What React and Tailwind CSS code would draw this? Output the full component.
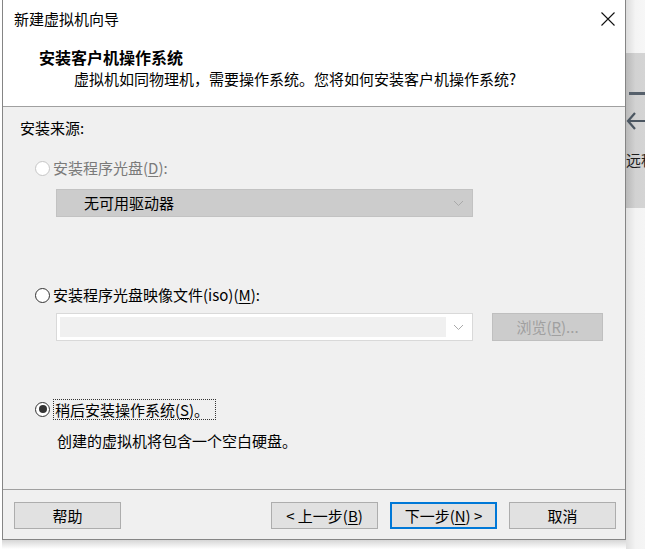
import React from 'react';

const Mn = ({ children }) => <span className="underline underline-offset-2">{children}</span>;

const Radio = ({ checked, disabled }) => (
  <span
    className={`w-[15px] h-[15px] rounded-full border flex items-center justify-center shrink-0 bg-white ${
      disabled ? 'border-[#c6c6c6]' : 'border-[#333333]'
    }`}
  >
    {checked && <span className="w-[8px] h-[8px] rounded-full bg-[#333333]" />}
  </span>
);

const Chevron = () => (
  <svg width="11" height="7" viewBox="0 0 11 7" fill="none">
    <path d="M1 1 L5.5 5.5 L10 1" stroke="#a9a9a9" strokeWidth="1" />
  </svg>
);

const Button = ({ children, primary }) => (
  <button
    type="button"
    className={`w-[107px] h-[27px] bg-[#e1e1e1] text-[15px] leading-[20px] text-black flex items-center justify-center ${
      primary ? 'border-2 border-[#0078d7]' : 'border border-[#adadad]'
    }`}
  >
    {children}
  </button>
);

const App = () => {
  return (
    <div className="w-[645px] h-[549px] flex bg-white overflow-hidden font-['Noto_Sans_CJK_SC','Noto_Sans',sans-serif] text-[15px] leading-[20px] text-black">
      <div className="w-[626px] pl-[2px] flex flex-col">
        <div className="w-[624px] h-[540px] flex flex-col border-x border-b border-[#858585]">
          {/* title bar */}
          <div className="h-[37px] bg-white flex items-center justify-between pl-[11px] pr-[10px]">
            <span>新建虚拟机向导</span>
            <svg width="14" height="14" viewBox="0 0 14 14" className="mt-[1px]">
              <path d="M0.5 0.5 L13.5 13.5 M13.5 0.5 L0.5 13.5" stroke="#111" strokeWidth="1.1" />
            </svg>
          </div>

          {/* header */}
          <div className="h-[70px] bg-white border-b border-[#a0a0a0] pt-[10px]">
            <div className="pl-[36px] font-bold text-[16px]">安装客户机操作系统</div>
            <div className="pl-[71px] mt-[2px]">虚拟机如同物理机，需要操作系统。您将如何安装客户机操作系统?</div>
          </div>

          {/* body */}
          <div className="h-[382px] bg-[#f0f0f0] pt-[11px] flex flex-col">
            <div className="ml-[17px]">安装来源:</div>

            <div className="ml-[32px] mt-[20px] h-[20px] flex items-center gap-[3px]">
              <Radio disabled />
              <span className="text-[#7a7a7a]">
                安装程序光盘(<Mn>D</Mn>):
              </span>
            </div>

            <div className="ml-[53px] mt-[11px] w-[417px] h-[28px] bg-[#cccccc] border border-[#c2c2c2] flex items-center justify-between pl-[27px] pr-[8px]">
              <span>无可用驱动器</span>
              <Chevron />
            </div>

            <div className="ml-[32px] mt-[68px] h-[20px] flex items-center gap-[3px]">
              <Radio />
              <span>
                安装程序光盘映像文件(iso)(<Mn>M</Mn>):
              </span>
            </div>

            <div className="ml-[53px] mt-[8px] flex gap-[19px]">
              <div className="w-[417px] h-[28px] bg-white border border-[#d9d9d9] flex items-center p-[3px] pr-[8px] gap-[7px]">
                <div className="flex-1 h-full bg-[#f0f0f0]" />
                <Chevron />
              </div>
              <div className="w-[111px] h-[28px] bg-[#cccccc] border border-[#bfbfbf] flex items-center justify-center text-[#a0a0a0]">
                浏览(<Mn>R</Mn>)...
              </div>
            </div>

            <div className="ml-[32px] mt-[57px] h-[22px] flex items-center gap-[3px]">
              <Radio checked />
              <span className="border border-dotted border-[#333] px-[1px] leading-[19px] pr-[6px]">
                稍后安装操作系统(<Mn>S</Mn>)。
              </span>
            </div>

            <div className="ml-[54px] mt-[11px]">创建的虚拟机将包含一个空白硬盘。</div>
          </div>

          {/* footer */}
          <div className="flex-1 bg-[#f0f0f0] border-t border-[#a0a0a0] pt-[12px] flex pl-[11px] pr-[9px]">
            <Button>帮助</Button>
            <div className="flex-1" />
            <div className="flex gap-[12px]">
              <Button>
                &lt; 上一步(<Mn>B</Mn>)
              </Button>
              <Button primary>
                下一步(<Mn>N</Mn>) &gt;
              </Button>
              <Button>取消</Button>
            </div>
          </div>
        </div>
        <div className="h-[9px] bg-gradient-to-b from-[#d6d6d6] to-white" />
      </div>

      {/* background window peeking out on the right */}
      <div className="w-[19px] flex flex-col overflow-hidden">
        <div className="h-[53px] bg-gradient-to-r from-[#dcdcdc] via-[#f4f4f4] to-[#f7f7f7]" />
        <div className="h-[155px] bg-gradient-to-r from-[#b9b9b9] via-[#d2d2d2] to-[#d4d4d4] flex flex-col">
          <div className="mt-[39px] ml-[3px] h-[3px] bg-[#56606b]" />
          <svg width="19" height="20" viewBox="0 0 19 20" className="mt-[16px]">
            <path d="M9 2 L2 10 L9 18 M2 10 L19 10" stroke="#4b5661" strokeWidth="2.2" fill="none" />
          </svg>
          <div className="mt-[19px] whitespace-nowrap text-[15px] text-[#1c1c1c]">远程</div>
        </div>
        <div className="flex-1 bg-gradient-to-r from-[#e0e0e0] via-[#f3f3f3] to-[#f5f5f5]" />
      </div>
    </div>
  );
};

export default App;
